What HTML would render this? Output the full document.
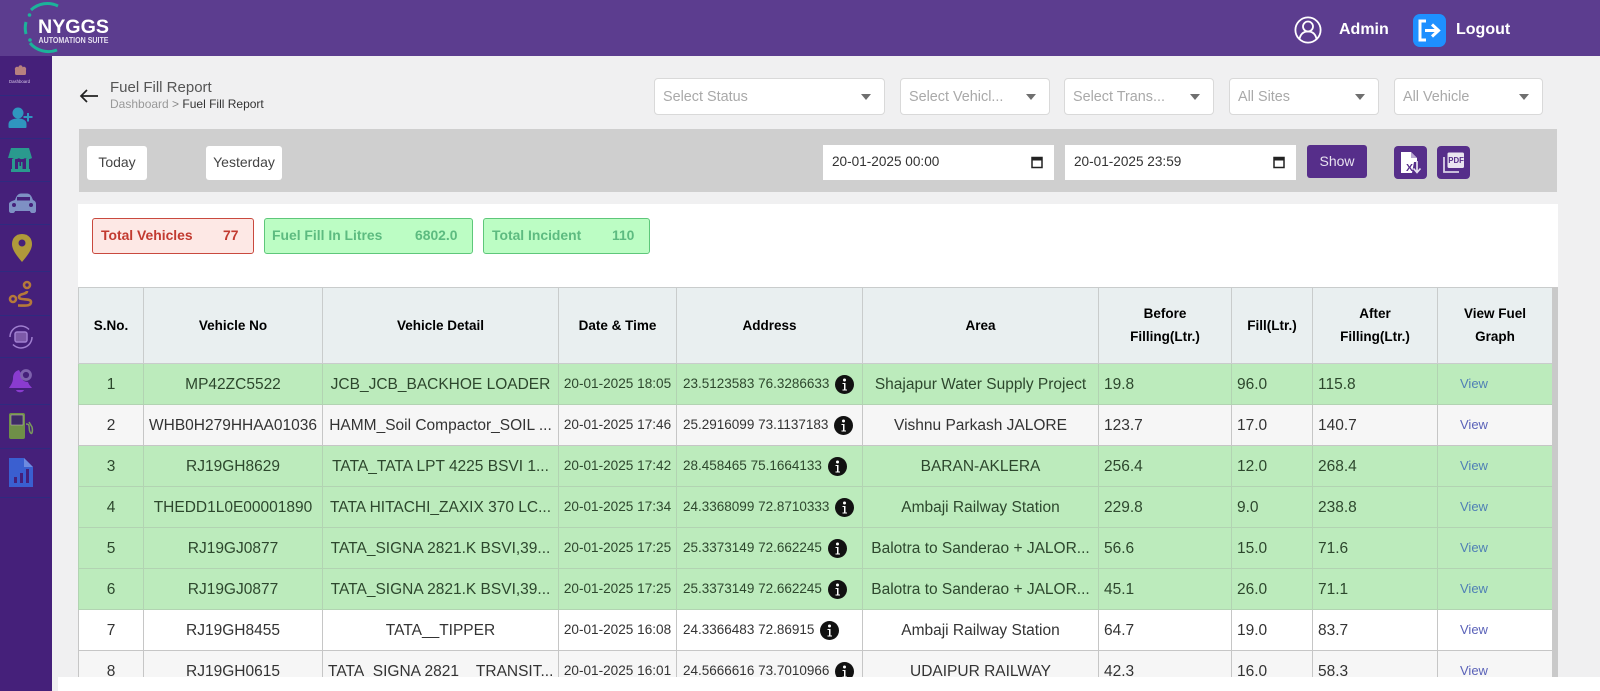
<!DOCTYPE html>
<html><head><meta charset="utf-8"><title>Fuel Fill Report</title>
<style>
*{box-sizing:border-box}
html,body{margin:0;padding:0}
body{width:1600px;height:691px;overflow:hidden;position:relative;background:#f0f0f1;font-family:"Liberation Sans",sans-serif;color:#333}
.abs{position:absolute}
#hd{left:0;top:0;width:1600px;height:56px;background:#5c3d8f}
#sb{left:0;top:56px;width:52px;height:635px;background:#45207a}
.sep{position:absolute;left:0;width:50px;height:1px;background:#2f2a80}
.sel{position:absolute;top:78px;height:37px;background:#fff;border:1px solid #d9d9d9;border-radius:4px;font-size:14.4px;color:#a9a9a9;line-height:36px;padding-left:8px}
.sel:after{content:"";position:absolute;right:13px;top:15px;border-left:5.5px solid transparent;border-right:5.5px solid transparent;border-top:6px solid #6f6f6f}
.btn{position:absolute;top:146px;height:34px;background:#fff;border-radius:3px;font-size:14px;line-height:33px;text-align:center;color:#444}
.dt{position:absolute;top:145px;height:35px;background:#fff;font-size:13.6px;line-height:33px;padding-left:9px;color:#333}
.dt svg{position:absolute;right:10px;top:10px}
.chip{position:absolute;top:218px;height:36px;border-radius:3px;font-size:13.9px;font-weight:bold;line-height:33px}
.chip span{position:absolute;top:0}
.r{background:#fde8e5;border:1px solid #c9493e;color:#c23a30}
.g{background:#bcfdc4;border:1px solid #5ec77a;color:#5dbb80}
#tw{left:78px;top:287px;width:1480px;height:390px;overflow:hidden;background:#fff}
#sc{position:absolute;right:0;top:0;width:6px;height:390px;background:#c9c9c9}
table{border-collapse:collapse;table-layout:fixed;width:1474px}
th{background:#e9eff0;height:76px;font-size:13.5px;line-height:23px;color:#000;border:1px solid #c9cccc;padding:0 4px 1px;text-align:center}
td{height:41px;padding:1px 5px 0;font-size:15.5px;border:1px solid #c6c6c6;white-space:nowrap;overflow:hidden;text-align:center;color:#333}
tr.a td{background:#bcebbc;color:#2d472d;border-color:#b2d3b2}
tr.b td{background:#f6f6f6}
tr.c td{background:#fff}
td.d{font-size:13.6px;padding:0 4px 1px;text-align:center}
td.ad{font-size:13.5px;text-align:left;padding:0 0 1px 6px}
td.ad svg{vertical-align:-5px;margin-left:6px;position:relative;top:1px}
td.l{text-align:left}
td.v{font-size:13px;color:#5a62b8;text-align:left;padding:0 0 1px 22px}
tr.a td.v{color:#4f7fb5}
</style></head><body>

<div class="abs" id="hd"></div>
<svg class="abs" style="left:20px;top:0" width="100" height="56" viewBox="0 0 100 56">
<path d="M11 10A24 24 0 0 1 38 6" fill="none" stroke="#1cb39a" stroke-width="3"/>
<path d="M10 43A24 24 0 0 0 37 50" fill="none" stroke="#1cb39a" stroke-width="3"/>
<path d="M6 22A24 24 0 0 0 6 34" fill="none" stroke="#1cb39a" stroke-width="3"/>
<circle cx="9.500" cy="15" r="1.800" fill="#1cb39a"/><circle cx="10" cy="40" r="1.800" fill="#1cb39a"/>
<text x="18" y="33" font-family="Liberation Sans" font-weight="bold" font-size="19.500" fill="#fff" textLength="71" lengthAdjust="spacingAndGlyphs">NYGGS</text>
<text x="18.500" y="43" font-family="Liberation Sans" font-weight="bold" font-size="8" fill="#e6e0f0" textLength="70" lengthAdjust="spacingAndGlyphs">AUTOMATION SUITE</text>
</svg>
<svg class="abs" style="left:1293px;top:15px" width="30" height="30" viewBox="0 0 30 30" fill="none" stroke="#fff" stroke-width="1.800">
<circle cx="15" cy="15" r="12.600"/><circle cx="15" cy="11.500" r="5"/><path d="M6.500 24c1-5 4-7.500 8.500-7.500s7.500 2.500 8.500 7.500"/>
</svg>
<div class="abs" style="left:1339px;top:20px;font-size:16px;font-weight:bold;color:#fff;line-height:20px">Admin</div>
<svg class="abs" style="left:1413px;top:14px" width="33" height="33" viewBox="0 0 33 33">
<rect width="33" height="33" rx="7" fill="#1e90ff"/>
<path d="M13 7H7v19h6" fill="none" stroke="#fff" stroke-width="3"/>
<path d="M12 16.500h12M19 10.500l6.500 6-6.500 6" fill="none" stroke="#fff" stroke-width="3"/>
</svg>
<div class="abs" style="left:1456px;top:20px;font-size:16px;font-weight:bold;color:#fff;line-height:20px">Logout</div>

<div class="abs" id="sb">
<div class="sep" style="top:39px"></div><div class="sep" style="top:82px"></div><div class="sep" style="top:125px"></div><div class="sep" style="top:168px"></div><div class="sep" style="top:215px"></div><div class="sep" style="top:259px"></div><div class="sep" style="top:301px"></div><div class="sep" style="top:348px"></div><div class="sep" style="top:392px"></div><div class="sep" style="top:441px"></div>
</div>
<svg class="abs" style="left:0;top:56px" width="52" height="440" viewBox="0 0 52 440">
<g fill="#b7807f"><circle cx="17" cy="13" r="2.200"/><circle cx="20.500" cy="11.500" r="2.200"/><circle cx="24" cy="13" r="2.200"/><rect x="15" y="13" width="11" height="6" rx="1.500"/></g>
<text x="9" y="27" font-family="Liberation Sans" font-size="4.800" fill="#d8c8e8" textLength="21" lengthAdjust="spacingAndGlyphs">Dashboard</text>
<g fill="#2f96bf"><circle cx="18" cy="57" r="5.500"/><path d="M8.500 71v-3c0-3.500 4-5.500 9.500-5.500s8.500 2 8.500 5.500v3c0 .5-.5 1-1 1H9.500c-.5 0-1-.5-1-1z"/><path d="M27 57h2v3h3.500v2H29v3.500h-2V62h-3.500v-2H27z"/></g>
<g fill="#2a9a8e"><path d="M11 92h18l3 10c-2.500 1.500-5 1.500-7 0-1.500 1.500-5 1.500-6 0-2 1.500-5 1.500-7 0l-4 0z"/><path d="M12 103h3v11h-3zM26 103h3v11h-3zM11 113h19v3H11z"/><path d="M18 106h1.500v4h1.500v-4h1.500v7H18z"/></g>
<path d="M15 144c1.500-4 3-6.500 6-6.500h6c3 0 4.500 2.500 6 6.500 2 1 3 2 3 4v7c0 1-1 2-2 2h-2c-1 0-2-1-2-2H15c0 1-1 2-2 2h-2c-1 0-2-1-2-2v-7c0-2 3-3 6-4z" fill="#7e90c4"/><circle cx="14" cy="149" r="2" fill="#45207a"/><circle cx="31" cy="149" r="2" fill="#45207a"/><rect x="17" y="141" width="13" height="3.500" fill="#45207a"/>
<path d="M22 178c-6.500 0-10 4.500-10 10 0 6 5 12 10 18 5-6 10-12 10-18 0-5.500-3.500-10-10-10z" fill="#b09a3a"/><circle cx="22" cy="187" r="3.500" fill="#45207a"/>
<g fill="none" stroke="#b5793a" stroke-width="2.600"><circle cx="13" cy="243" r="3"/><circle cx="27" cy="229" r="3"/><path d="M27 235c0 4-8 2-8 6s12 .5 12 5-6 3.500-13 3.500"/></g>
<g fill="none" stroke="#a07fd0" stroke-width="1.500"><path d="M10 281a11 11 0 0 1 19-7.500M32 281a11 11 0 0 1-19 7.500"/><rect x="15" y="276" width="12" height="10" rx="2" fill="#7c59a8"/></g>
<g fill="#8a3bd0"><path d="M19 314c-4 1-6 4-6 8 0 5-3 8-4 10h23c-1.500-2-3-3-4-6-5 0-8-4-7-9-1-1-1.500-2-2-3z"/><path d="M16 334h8c-1 3-7 3-8 0z"/></g><circle cx="26" cy="319" r="4.500" fill="none" stroke="#7e62ad" stroke-width="2.800"/>
<g><rect x="9" y="357" width="16" height="26" rx="2" fill="#6f8f48"/><rect x="11" y="359" width="12" height="10" fill="#3e2c66" stroke="#cbb" stroke-width=".5"/><path d="M26 368c5 0 2 4 4 8 2 4 3-1 2-5l-3-5" fill="none" stroke="#7a9a5c" stroke-width="1.500"/></g>
<path d="M9 402h15l9 9v20H9z" fill="#3a5fd0"/><path d="M24 402v9h9z" fill="#6d8ae0"/><g fill="#45207a"><rect x="14" y="421" width="3" height="6"/><rect x="20" y="417" width="3" height="10"/><rect x="26" y="413" width="3" height="14"/></g>
</svg>

<svg class="abs" style="left:79px;top:88px" width="21" height="16" viewBox="0 0 21 16" fill="none" stroke="#222" stroke-width="1.700"><path d="M19 8H2M8 2L2 8l6 6"/></svg>
<div class="abs" style="left:110px;top:79px;font-size:15px;line-height:18px;color:#555">Fuel Fill Report</div>
<div class="abs" style="left:110px;top:96px;font-size:12px;line-height:17px;color:#999">Dashboard <span style="color:#888">&gt;</span> <span style="color:#333">Fuel Fill Report</span></div>

<div class="sel" style="left:654px;width:231px">Select Status</div>
<div class="sel" style="left:900px;width:150px">Select Vehicl...</div>
<div class="sel" style="left:1064px;width:150px">Select Trans...</div>
<div class="sel" style="left:1229px;width:150px">All Sites</div>
<div class="sel" style="left:1394px;width:149px">All Vehicle</div>

<div class="abs" style="left:79px;top:129px;width:1478px;height:63px;background:#cfcfcf"></div>
<div class="btn" style="left:87px;width:60px">Today</div>
<div class="btn" style="left:206px;width:76px">Yesterday</div>
<div class="dt" style="left:823px;width:231px">20-01-2025 00:00<svg width="14" height="14" viewBox="0 0 14 14" fill="none" stroke="#222" stroke-width="1.500"><rect x="2" y="2.500" width="10" height="10"/><path d="M2 4h10" stroke-width="3"/></svg></div>
<div class="dt" style="left:1065px;width:231px">20-01-2025 23:59<svg width="14" height="14" viewBox="0 0 14 14" fill="none" stroke="#222" stroke-width="1.500"><rect x="2" y="2.500" width="10" height="10"/><path d="M2 4h10" stroke-width="3"/></svg></div>
<div class="abs" style="left:1307px;top:145px;width:60px;height:33px;border-radius:3px;background:#562e8a;color:#e8e2f0;font-size:14px;line-height:33px;text-align:center">Show</div>
<svg class="abs" style="left:1394px;top:146px" width="33" height="33" viewBox="0 0 33 33"><rect width="33" height="33" rx="4" fill="#562e8a"/><path d="M7 6h10l6 6v4h-3l-2 11H7z" fill="#fff"/><path d="M17 6v6h6z" fill="#b9a8d2"/><text x="12" y="25" font-family="Liberation Sans" font-weight="bold" font-size="10.500" fill="#562e8a">X</text><path d="M23 15v11M19.500 22.500L23 26.500l3.500-4" fill="none" stroke="#e6e0f0" stroke-width="1.700"/></svg>
<svg class="abs" style="left:1437px;top:146px" width="33" height="33" viewBox="0 0 33 33"><rect width="33" height="33" rx="4" fill="#562e8a"/><path d="M7 11v15h15" fill="none" stroke="#d9d0e6" stroke-width="1.800"/><rect x="10.500" y="6.500" width="16.500" height="15.500" rx="1.500" fill="#e9e4f0"/><text x="11.300" y="17" font-family="Liberation Sans" font-weight="bold" font-size="7.800" fill="#562e8a">PDF</text></svg>

<div class="abs" style="left:78px;top:204px;width:1480px;height:84px;background:#fff"></div>
<div class="chip r" style="left:92px;width:162px"><span style="left:8px">Total Vehicles</span><span style="left:130px">77</span></div>
<div class="chip g" style="left:264px;width:209px"><span style="left:7px">Fuel Fill In Litres</span><span style="left:150px">6802.0</span></div>
<div class="chip g" style="left:483px;width:167px"><span style="left:8px">Total Incident</span><span style="left:128px">110</span></div>

<div class="abs" id="tw">
<div id="sc"></div>
<table>
<colgroup><col style="width:65px"><col style="width:179px"><col style="width:236px"><col style="width:118px"><col style="width:186px"><col style="width:236px"><col style="width:133px"><col style="width:81px"><col style="width:125px"><col style="width:115px"></colgroup>
<tr><th>S.No.</th><th>Vehicle No</th><th>Vehicle Detail</th><th>Date &amp; Time</th><th>Address</th><th>Area</th><th>Before<br>Filling(Ltr.)</th><th>Fill(Ltr.)</th><th>After<br>Filling(Ltr.)</th><th>View Fuel<br>Graph</th></tr>
<tr class="a"><td>1</td><td>MP42ZC5522</td><td>JCB_JCB_BACKHOE LOADER</td><td class="d">20-01-2025 18:05</td><td class="ad">23.5123583 76.3286633<svg width="19" height="19" viewBox="0 0 19 19"><circle cx="9.500" cy="9.500" r="9.500" fill="#111"/><circle cx="9.500" cy="5" r="1.500" fill="#fff"/><path d="M7.500 8h3v6.500h1.500v1H7.500v-1H9V9H7.500z" fill="#fff"/></svg></td><td>Shajapur Water Supply Project</td><td class="l">19.8</td><td class="l">96.0</td><td class="l">115.8</td><td class="v">View</td></tr>
<tr class="b"><td>2</td><td>WHB0H279HHAA01036</td><td>HAMM_Soil Compactor_SOIL ...</td><td class="d">20-01-2025 17:46</td><td class="ad">25.2916099 73.1137183<svg width="19" height="19" viewBox="0 0 19 19"><circle cx="9.500" cy="9.500" r="9.500" fill="#111"/><circle cx="9.500" cy="5" r="1.500" fill="#fff"/><path d="M7.500 8h3v6.500h1.500v1H7.500v-1H9V9H7.500z" fill="#fff"/></svg></td><td>Vishnu Parkash JALORE</td><td class="l">123.7</td><td class="l">17.0</td><td class="l">140.7</td><td class="v">View</td></tr>
<tr class="a"><td>3</td><td>RJ19GH8629</td><td>TATA_TATA LPT 4225 BSVI 1...</td><td class="d">20-01-2025 17:42</td><td class="ad">28.458465 75.1664133<svg width="19" height="19" viewBox="0 0 19 19"><circle cx="9.500" cy="9.500" r="9.500" fill="#111"/><circle cx="9.500" cy="5" r="1.500" fill="#fff"/><path d="M7.500 8h3v6.500h1.500v1H7.500v-1H9V9H7.500z" fill="#fff"/></svg></td><td>BARAN-AKLERA</td><td class="l">256.4</td><td class="l">12.0</td><td class="l">268.4</td><td class="v">View</td></tr>
<tr class="a"><td>4</td><td>THEDD1L0E00001890</td><td>TATA HITACHI_ZAXIX 370 LC...</td><td class="d">20-01-2025 17:34</td><td class="ad">24.3368099 72.8710333<svg width="19" height="19" viewBox="0 0 19 19"><circle cx="9.500" cy="9.500" r="9.500" fill="#111"/><circle cx="9.500" cy="5" r="1.500" fill="#fff"/><path d="M7.500 8h3v6.500h1.500v1H7.500v-1H9V9H7.500z" fill="#fff"/></svg></td><td>Ambaji Railway Station</td><td class="l">229.8</td><td class="l">9.0</td><td class="l">238.8</td><td class="v">View</td></tr>
<tr class="a"><td>5</td><td>RJ19GJ0877</td><td>TATA_SIGNA 2821.K BSVI,39...</td><td class="d">20-01-2025 17:25</td><td class="ad">25.3373149 72.662245<svg width="19" height="19" viewBox="0 0 19 19"><circle cx="9.500" cy="9.500" r="9.500" fill="#111"/><circle cx="9.500" cy="5" r="1.500" fill="#fff"/><path d="M7.500 8h3v6.500h1.500v1H7.500v-1H9V9H7.500z" fill="#fff"/></svg></td><td>Balotra to Sanderao + JALOR...</td><td class="l">56.6</td><td class="l">15.0</td><td class="l">71.6</td><td class="v">View</td></tr>
<tr class="a"><td>6</td><td>RJ19GJ0877</td><td>TATA_SIGNA 2821.K BSVI,39...</td><td class="d">20-01-2025 17:25</td><td class="ad">25.3373149 72.662245<svg width="19" height="19" viewBox="0 0 19 19"><circle cx="9.500" cy="9.500" r="9.500" fill="#111"/><circle cx="9.500" cy="5" r="1.500" fill="#fff"/><path d="M7.500 8h3v6.500h1.500v1H7.500v-1H9V9H7.500z" fill="#fff"/></svg></td><td>Balotra to Sanderao + JALOR...</td><td class="l">45.1</td><td class="l">26.0</td><td class="l">71.1</td><td class="v">View</td></tr>
<tr class="c"><td>7</td><td>RJ19GH8455</td><td>TATA__TIPPER</td><td class="d">20-01-2025 16:08</td><td class="ad">24.3366483 72.86915<svg width="19" height="19" viewBox="0 0 19 19"><circle cx="9.500" cy="9.500" r="9.500" fill="#111"/><circle cx="9.500" cy="5" r="1.500" fill="#fff"/><path d="M7.500 8h3v6.500h1.500v1H7.500v-1H9V9H7.500z" fill="#fff"/></svg></td><td>Ambaji Railway Station</td><td class="l">64.7</td><td class="l">19.0</td><td class="l">83.7</td><td class="v">View</td></tr>
<tr class="b"><td>8</td><td>RJ19GH0615</td><td>TATA_SIGNA 2821 _ TRANSIT...</td><td class="d">20-01-2025 16:01</td><td class="ad">24.5666616 73.7010966<svg width="19" height="19" viewBox="0 0 19 19"><circle cx="9.500" cy="9.500" r="9.500" fill="#111"/><circle cx="9.500" cy="5" r="1.500" fill="#fff"/><path d="M7.500 8h3v6.500h1.500v1H7.500v-1H9V9H7.500z" fill="#fff"/></svg></td><td>UDAIPUR RAILWAY</td><td class="l">42.3</td><td class="l">16.0</td><td class="l">58.3</td><td class="v">View</td></tr>
</table>
</div>
<div class="abs" style="left:58px;top:677px;width:1542px;height:14px;background:#fff"></div>
</body></html>
